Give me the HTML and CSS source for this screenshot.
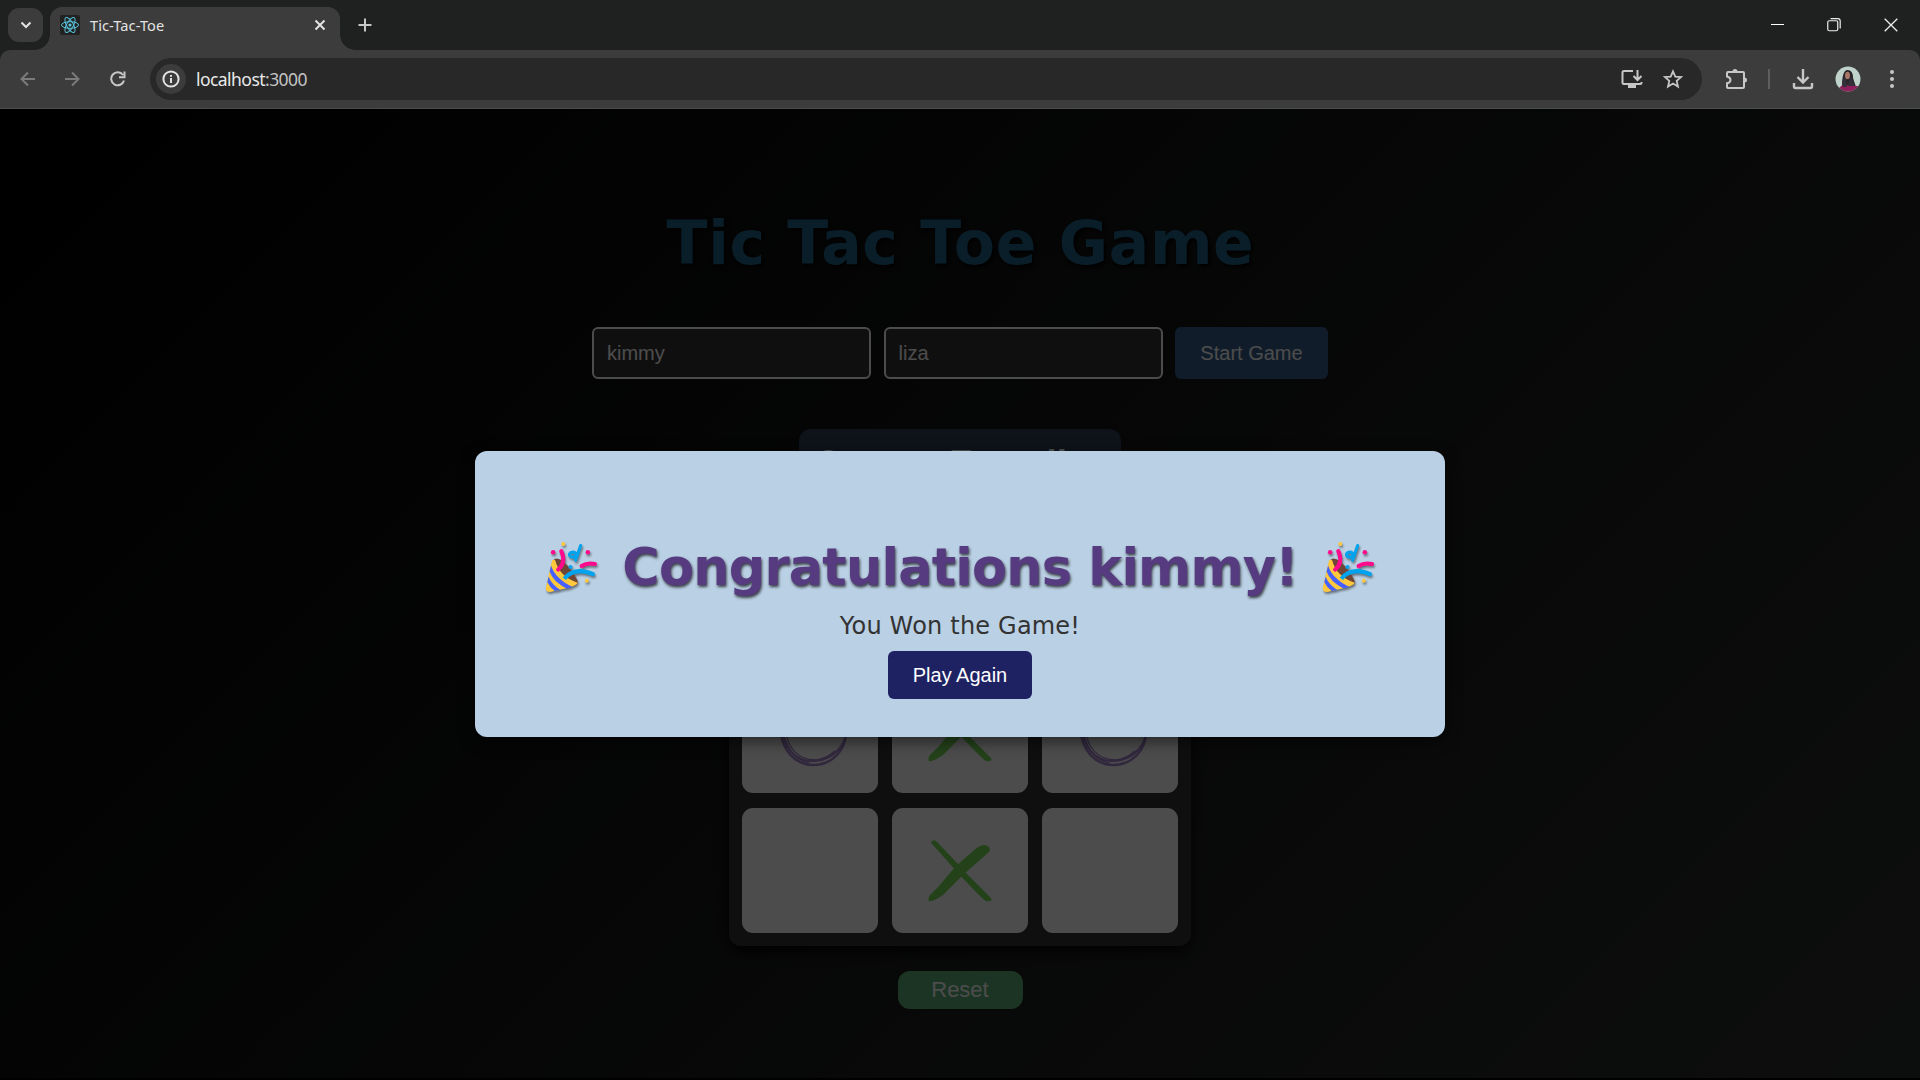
FILE: index.html
```html
<!DOCTYPE html>
<html lang="en">
<head>
<meta charset="utf-8">
<title>Tic-Tac-Toe</title>
<link rel="stylesheet" href="styles.css">
</head>
<body>
<svg class="defs" width="0" height="0" aria-hidden="true">
  <symbol id="popper" viewBox="0 0 50 50">
    <path d="M7 18 Q10 14 17 19 Q26 27 31 38 Q32 43 25 43 L9 36Z" fill="#6f4536"/>
    <path d="M6 18 Q7 17 9 18 Q13 34 31 40 Q30 43 21 45 L4 49 Q-1 49 0 44Z" fill="#ffc83d"/>
    <path d="M5 23 Q9 36 26 44 L20 45.500 Q7 39 3.500 29Z M2.500 34 Q6 42 14 47 L8.500 48 Q4 45 1.300 39.500Z" fill="#4660ff"/>
    <path d="M15 9 Q20 20 12 27 M35 23.500 Q40 20 48 21.500" fill="none" stroke="#ff0a8c" stroke-width="4" stroke-linecap="round"/>
    <path d="M18 36 Q28 24 46 31.500" fill="none" stroke="#00a3ee" stroke-width="4"/>
    <path d="M34 3.500 L29 18 M30.500 14 Q29 9.500 25.500 10 Q22.500 11 23 13 Q24.500 16 30.500 14" fill="none" stroke="#00a3ee" stroke-width="3" stroke-linecap="round" stroke-linejoin="round"/>
    <circle cx="46" cy="31.500" r="2" fill="#00a3ee"/>
    <circle cx="24" cy="24.500" r="2" fill="#00a3ee"/>
    <circle cx="7" cy="10" r="2.200" fill="#ff0a8c"/><circle cx="41" cy="10" r="2.200" fill="#ff0a8c"/>
    <circle cx="17" cy="2" r="1.900" fill="#ffc83d"/><circle cx="40" cy="38" r="1.900" fill="#ffc83d"/>
  </symbol>
  <symbol id="mark-x" viewBox="0 0 64 62">
    <path d="M4 1 Q7 -1 10 3 L31 25 L38 33 L54 49 L63 58 Q65 62 58 61 Q54 59 30 33 L5 5 Q2 3 4 1Z" fill="#7bdc57"/>
    <path d="M1 61 Q-1 57 4 53 L11 46 L27 27 L37 18 L43 13 Q52 4 57 5 Q64 7 61 12 L36 34 L15 55 Q5 62 1 61Z" fill="#7bdc57"/>
  </symbol>
  <symbol id="mark-o" viewBox="0 0 68 68">
    <g fill="none" stroke="#a585cf">
      <path d="M1 30 C2 12 17 2 34 2 S66 14 66 33 S52 66 34 66 S3 52 1 30Z" stroke-width="2.400"/>
      <path d="M3 26 C3 48 16 64 36 62 S67 44 66 30" stroke-width="2"/>
      <path d="M7 30 C7 49 19 61 36 61 Q47 60 55 52 M3 24 C5 48 15 61 30 64" stroke-width="1.300"/>
    </g>
  </symbol>
</svg>

<header class="browser">
  <div class="tabstrip">
    <div class="tab-search"><svg width="12" height="8" viewBox="0 0 12 8"><path d="M1.500 1.500 6 6l4.500-4.500" class="line bright"/></svg></div>
    <div class="tab">
      <svg class="favicon" width="20" height="20" viewBox="0 0 20 20"><rect width="20" height="20" rx="2" fill="#222"/><g fill="none" stroke="#58c4dc" stroke-width="1"><ellipse cx="10" cy="10" rx="8.500" ry="3.300"/><ellipse cx="10" cy="10" rx="8.500" ry="3.300" transform="rotate(60 10 10)"/><ellipse cx="10" cy="10" rx="8.500" ry="3.300" transform="rotate(120 10 10)"/></g><circle cx="10" cy="10" r="1.600" fill="#58c4dc"/></svg>
      <span class="tab-title">Tic-Tac-Toe</span>
      <svg width="12" height="12" viewBox="0 0 12 12"><path d="M1.500 1.500l9 9M10.500 1.500l-9 9" class="line bright"/></svg>
    </div>
    <svg class="new-tab" width="14" height="14" viewBox="0 0 14 14"><path d="M7 .5v13M.5 7h13" class="line"/></svg>
    <div class="window-controls">
      <svg width="14" height="14" viewBox="0 0 14 14"><path d="M1 6.500h13" stroke="#fff"/></svg>
      <svg width="14" height="14" viewBox="0 0 14 14"><rect x=".75" y="2.750" width="10" height="10" rx="1.500" fill="none" stroke="#eee" stroke-width="1.200"/><path d="M3.500.6h7.200q2.500 0 2.500 2.500v7.500" fill="none" stroke="#eee" stroke-width="1.200"/></svg>
      <svg width="14" height="14" viewBox="0 0 14 14"><path d="M.7.700l12.600 12.600M13.300.700.7 13.300" stroke="#eee" stroke-width="1.300"/></svg>
    </div>
  </div>
  <div class="toolbar">
    <div class="nav">
      <svg class="dim" width="16" height="16" viewBox="0 0 16 16"><path d="M15 8H2M8 1.500 1.500 8 8 14.500" class="line"/></svg>
      <svg class="dim" width="16" height="16" viewBox="0 0 16 16"><path d="M0 8h13M7 1.500 13.500 8 7 14.500" class="line"/></svg>
      <svg width="16" height="16" viewBox="0 0 16 16"><path d="M14 9.500A6.500 6.500 0 1 1 13 4M14.500.5v5.700H9" class="line"/></svg>
    </div>
    <div class="omnibox">
      <span class="site-info"><svg width="18" height="18" viewBox="0 0 18 18"><circle cx="9" cy="9" r="7.600" class="line bright"/><path d="M9 8v5M9 5v1.800" class="line bright"/></svg></span>
      <span class="url">localhost<span class="port">:3000</span></span>
      <svg class="install" width="22" height="20" viewBox="0 0 22 20"><path d="M12 2H3Q1.500 2 1.500 3.500v10Q1.500 15 3 15h16q1.500 0 1.500-1.500V13M16.500 1v9M12.500 7l4 4 4-4" class="line"/><path d="M7 15h8v4H7z" fill="#c7c7c7"/></svg>
      <svg class="star" width="20" height="20" viewBox="0 0 20 20"><path d="M10 2.300l2.300 5.300 5.700.5-4.300 3.800 1.300 5.700-5-3-5 3 1.300-5.700L2 8.100l5.700-.5z" class="line thin"/></svg>
    </div>
    <svg class="puzzle" width="22" height="22" viewBox="0 0 22 22"><path d="M3 4h15q1 0 1 1v14q0 1-1 1H3q-1 0-1-1v-3.800q3.500-.5 3.500-3.200T2 8.500V5q0-1 1-1z" class="line"/><path d="M7.500 3.500a2.500 2.500 0 0 1 5 0zM19.500 9.500a2.500 2.500 0 0 1 0 5z" fill="#c7c7c7"/></svg>
    <span class="separator"></span>
    <svg class="download" width="22" height="22" viewBox="0 0 22 22"><path d="M11 1v13M5.500 9l5.500 5.500L16.500 9M2 15v3.500Q2 20 3.500 20h15q1.500 0 1.500-1.500V15" class="line heavy"/></svg>
    <svg class="avatar" width="26" height="26" viewBox="0 0 26 26"><defs><clipPath id="round"><circle cx="13" cy="13" r="12.500"/></clipPath></defs><g clip-path="url(#round)"><path d="M0 0h26v26H0z" fill="#bfd3cb"/><path d="M7 21Q7 4 12.500 4t5.500 8l3 9z" fill="#29252b"/><path d="M3 24Q6 18 12 19t11 1v7H3z" fill="#8e1f5c"/><path d="M9 11q-3 6-1 10l4 0-1-8zM15 12l-2 8 6 0-2-8z" fill="#34303a"/><ellipse cx="12.500" cy="9.500" rx="2.500" ry="3.800" fill="#a87767"/></g></svg>
    <svg class="more" width="4" height="18" viewBox="0 0 4 18"><g fill="#c7c7c7"><circle cx="2" cy="2" r="2"/><circle cx="2" cy="9" r="2"/><circle cx="2" cy="16" r="2"/></g></svg>
  </div>
</header>

<main class="game">
  <h1 class="title">Tic Tac Toe Game</h1>
  <div class="players">
    <div class="field">kimmy</div>
    <div class="field">liza</div>
    <button class="start">Start Game</button>
  </div>
  <div class="turn">Current Turn: liza</div>
  <div class="board">
    <div class="cell"></div><div class="cell"><svg class="x"><use href="#mark-x"/></svg></div><div class="cell"></div>
    <div class="cell"><svg class="o"><use href="#mark-o"/></svg></div><div class="cell"><svg class="x"><use href="#mark-x"/></svg></div><div class="cell"><svg class="o"><use href="#mark-o"/></svg></div>
    <div class="cell"></div><div class="cell"><svg class="x"><use href="#mark-x"/></svg></div><div class="cell"></div>
  </div>
  <button class="reset">Reset</button>

  <div class="overlay">
    <section class="modal">
      <h2 class="congrats">
        <svg class="emoji"><use href="#popper"/></svg>
        <span>Congratulations kimmy!</span>
        <svg class="emoji"><use href="#popper"/></svg>
      </h2>
      <p class="message">You Won the Game!</p>
      <button class="again">Play Again</button>
    </section>
  </div>
</main>
</body>
</html>
```

FILE: styles.css
```css
* { box-sizing: border-box; }
body {
  margin: 0;
  height: 1080px;
  overflow: hidden;
  background: #000;
  display: flex;
  flex-direction: column;
}
svg { display: block; flex: none; }
.defs { position: absolute; }
button { border: 0; padding: 0; font-family: "Liberation Sans", Arial, sans-serif; }

/* Browser frame */
.browser { flex: none; height: 109px; background: #1f2120; border-bottom: 1px solid #4a4d4c; font-family: "Noto Sans", sans-serif; }
.line { fill: none; stroke: #c7c7c7; stroke-width: 2; }
.line.bright { stroke: #e3e3e3; }
.line.thin { stroke-width: 1.8; }
.line.heavy { stroke-width: 2.4; }
.dim .line { stroke: #7b7b7b; }
.tabstrip { height: 50px; display: flex; align-items: center; padding-left: 8px; }
.tab-search { width: 35px; height: 34px; border-radius: 11px; background: #3c3c3c; display: grid; place-items: center; }
.tab {
  position: relative;
  align-self: flex-end;
  width: 290px;
  height: 43px;
  margin-left: 7px;
  padding: 0 14px 7px 10px;
  border-radius: 12px 12px 0 0;
  background: #3c3c3c;
  display: flex;
  align-items: center;
}
.tab::before, .tab::after { content: ""; position: absolute; bottom: 0; width: 15px; height: 15px; }
.tab::before { right: 100%; background: radial-gradient(circle at 0 0, transparent 14.5px, #3c3c3c 15px); }
.tab::after { left: 100%; background: radial-gradient(circle at 100% 0, transparent 14.5px, #3c3c3c 15px); }
.tab-title { flex: 1; margin-left: 10px; font-size: 14.6px; line-height: 20px; letter-spacing: .08px; color: #e3e3e3; }
.new-tab { margin-left: 18px; }
.window-controls { margin-left: auto; margin-right: 22px; display: flex; gap: 43px; }
.toolbar { height: 58px; background: #3c3c3c; border-radius: 10px 10px 0 0; display: flex; align-items: center; padding: 0 26px 0 20px; }
.nav { display: flex; gap: 29px; }
.omnibox { width: 1552px; height: 42px; margin-left: 24px; border-radius: 21px; background: #282828; display: flex; align-items: center; padding: 0 19px 0 6px; }
.site-info { width: 30px; height: 30px; border-radius: 50%; background: #3c3c3c; display: grid; place-items: center; }
.url { margin-left: 10px; font-size: 17.5px; color: #e8e8e8; letter-spacing: -0.55px; }
.port { color: #c3c3c3; }
.install { margin-left: auto; }
.star { margin-left: 20px; }
.puzzle { margin-left: 23px; }
.separator { width: 2px; height: 20px; margin-left: 21px; background: #5e5e5e; }
.download { margin-left: 22px; }
.avatar { margin-left: 21px; }
.more { margin-left: auto; }

/* Game page */
.game {
  position: relative;
  height: 969px;
  background: linear-gradient(135deg, #000 0%, #2b2f2d 100%);
  display: flex;
  flex-direction: column;
  align-items: center;
  font-family: "DejaVu Sans", Verdana, sans-serif;
}
.title { margin: 98px 0 0; font-size: 60px; line-height: 72px; letter-spacing: .7px; text-indent: 1px; white-space: nowrap; color: #22658a; text-shadow: 2px 2px 4px #000; }
.players { margin-top: 48px; display: flex; gap: 12.5px; }
.field { width: 279px; height: 52px; border: 2px solid #fff; border-radius: 6px; background: #333; padding: 0 13px; font: 20px/48px "Liberation Sans", Arial, sans-serif; color: #fff; }
.start { width: 153px; height: 52px; border-radius: 6px; background: #375f8c; color: #fff; font-size: 20px; }
.turn { width: 322px; height: 65px; margin-top: 50px; border-radius: 12px; background: #303f55; color: #fff; font-weight: bold; font-size: 28px; line-height: 65px; letter-spacing: .7px; text-align: center; white-space: nowrap; }
.board { margin-top: 21px; width: 462px; height: 431px; padding: 13px; border-radius: 12px; background: #333; box-shadow: 0 6px 14px rgba(0, 0, 0, .8); display: grid; grid-template-columns: repeat(3, 136px); grid-template-rows: repeat(3, 125px); gap: 15px 14px; }
.cell { border-radius: 11px; background: #fff; display: grid; place-items: center; }
.x { width: 64px; height: 62px; }
.o { width: 69px; height: 69px; margin: 4px 0 0 7px; }
.reset { width: 125px; height: 38px; margin-top: 25px; border-radius: 12px; background: #5eaf75; color: #fff; font-size: 22px; }

/* Winner dialog */
.overlay { position: absolute; inset: 0; background: rgba(0, 0, 0, .7); display: flex; align-items: center; justify-content: center; }
.modal { width: 970px; height: 286px; border-radius: 12px; background: #bad0e4; box-shadow: 0 5px 15px rgba(0, 0, 0, .5); display: flex; flex-direction: column; align-items: center; padding-top: 84px; }
.congrats { margin: 0; height: 66px; display: flex; align-items: center; gap: 25px; font-size: 51px; color: #573b80; white-space: nowrap; letter-spacing: -.8px; text-shadow: 1px 2px 3px rgba(0, 0, 0, .7); }
.emoji { width: 51px; height: 51px; overflow: visible; filter: drop-shadow(1px 2px 1px rgba(0, 0, 0, .45)); }
.message { margin: 9px 0 9px; font-size: 24px; line-height: 32px; color: #333; letter-spacing: .2px; white-space: nowrap; }
.again { width: 144px; height: 48px; padding-top: 1px; border-radius: 6px; background: #1e2262; color: #fff; font-size: 20px; }
```
